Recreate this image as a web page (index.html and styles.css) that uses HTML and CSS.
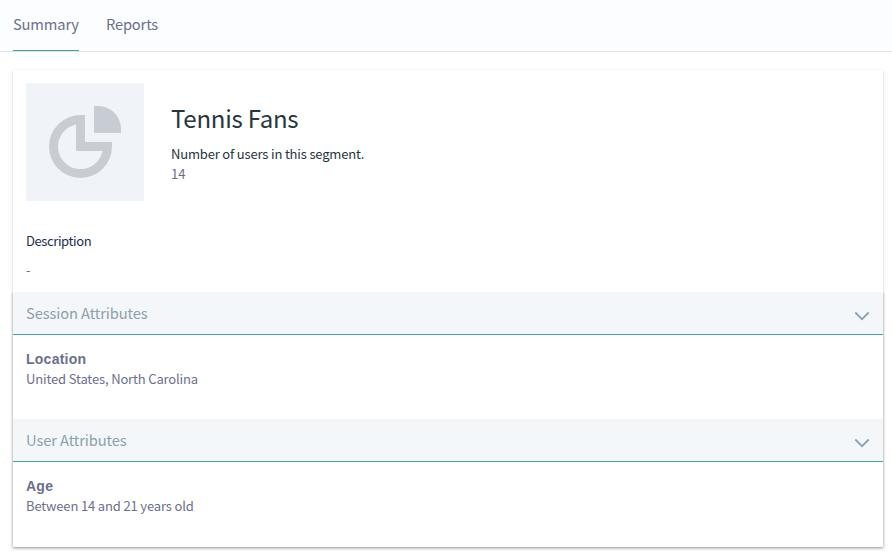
FILE: index.html
```html
<!DOCTYPE html>
<html lang="en">
<head>
<meta charset="utf-8">
<title>Tennis Fans</title>
<link rel="stylesheet" href="styles.css">
</head>
<body>
<nav class="tabs">
  <a class="tab active">Summary</a>
  <a class="tab">Reports</a>
</nav>
<main class="card">
  <header class="profile">
    <div class="thumb">
      <svg width="118" height="118" viewBox="0 0 118 118" fill="#c8ccd3">
        <path fill-rule="evenodd" d="M59 32H54.5A31.5 31.5 0 1 0 86 63.5V59H59ZM50 41.5V68H76.5A22.5 22.5 0 1 1 50 41.5Z"/>
        <path d="M68 23H72A23 23 0 0 1 95 46V50H68Z"/>
      </svg>
    </div>
    <div class="info">
      <h1>Tennis Fans</h1>
      <p class="caption">Number of users in this segment.</p>
      <p class="count">14</p>
    </div>
  </header>
  <section class="description">
    <h2>Description</h2>
    <p>-</p>
  </section>
  <div class="groups">
    <section class="group">
      <div class="bar"><span>Session Attributes</span>
        <svg width="16" height="10" viewBox="0 0 16 10" fill="none" stroke="#8ca1b1" stroke-width="1.8"><path d="M1.3 1.5L8 8.2L14.7 1.5"/></svg>
      </div>
      <div class="attribute">
        <h3>Location</h3>
        <p>United States, North Carolina</p>
      </div>
    </section>
    <section class="group">
      <div class="bar"><span>User Attributes</span>
        <svg width="16" height="10" viewBox="0 0 16 10" fill="none" stroke="#8ca1b1" stroke-width="1.8"><path d="M1.3 1.5L8 8.2L14.7 1.5"/></svg>
      </div>
      <div class="attribute">
        <h3>Age</h3>
        <p>Between 14 and 21 years old</p>
      </div>
    </section>
  </div>
</main>
</body>
</html>
```
FILE: styles.css
```css
* { box-sizing: border-box; }
body {
  margin: 0;
  height: 555px;
  overflow: hidden;
  background: #fff;
  color: #6b6f8d;
  font: 13px/20px "Noto Sans CJK SC", "Open Sans", sans-serif;
  letter-spacing: -.15px;
}
h1, h2, h3, p { margin: 0; font-weight: 400; }
.tabs {
  display: flex;
  gap: 27px;
  height: 52px;
  padding-left: 13px;
  background: #fcfdfe;
  border-bottom: 1px solid #dfe1e4;
}
.tab { height: 51px; font-size: 14.7px; line-height: 48px; }
.active { border-bottom: 1px solid #3fa3a5; }
.card {
  width: 870px;
  height: 477px;
  margin: 18px 0 0 13px;
  background: #fff;
  box-shadow: 0 1px 3px rgba(0, 0, 0, .2);
}
.profile { display: flex; gap: 27px; height: 161px; padding: 13px 13px 0; }
.thumb { width: 118px; height: 118px; background: #f0f3f8; }
.thumb svg, .bar svg { display: block; }
.info { padding-top: 17px; }
.info h1 { font-size: 24px; line-height: 36px; color: #263640; margin-bottom: 8px; letter-spacing: -.25px; }
.caption { color: #263640; letter-spacing: -.17px; }
.count { letter-spacing: 0; }
.description { height: 61px; padding-left: 13px; }
.description h2 { font-size: 13px; color: #20304c; margin-bottom: 9px; letter-spacing: -.4px; }
.groups {
  height: 255px;
  box-shadow: 0 1px 3px rgba(0, 0, 0, .28);
  clip-path: inset(0 -6px -6px -6px);
}
.group { height: 127px; }
.bar {
  display: flex;
  align-items: center;
  justify-content: space-between;
  height: 43px;
  padding: 0 13px;
  background: #f4f7fa;
  border-bottom: 1px solid #48a1a5;
  color: #8da0ad;
  font-size: 14.7px;
  letter-spacing: -.1px;
}
.bar svg { margin-top: 5px; }
.attribute { padding: 14px 13px 0; }
.attribute h3 { font: bold 14px/20px "Liberation Sans", sans-serif; letter-spacing: .25px; }
```
